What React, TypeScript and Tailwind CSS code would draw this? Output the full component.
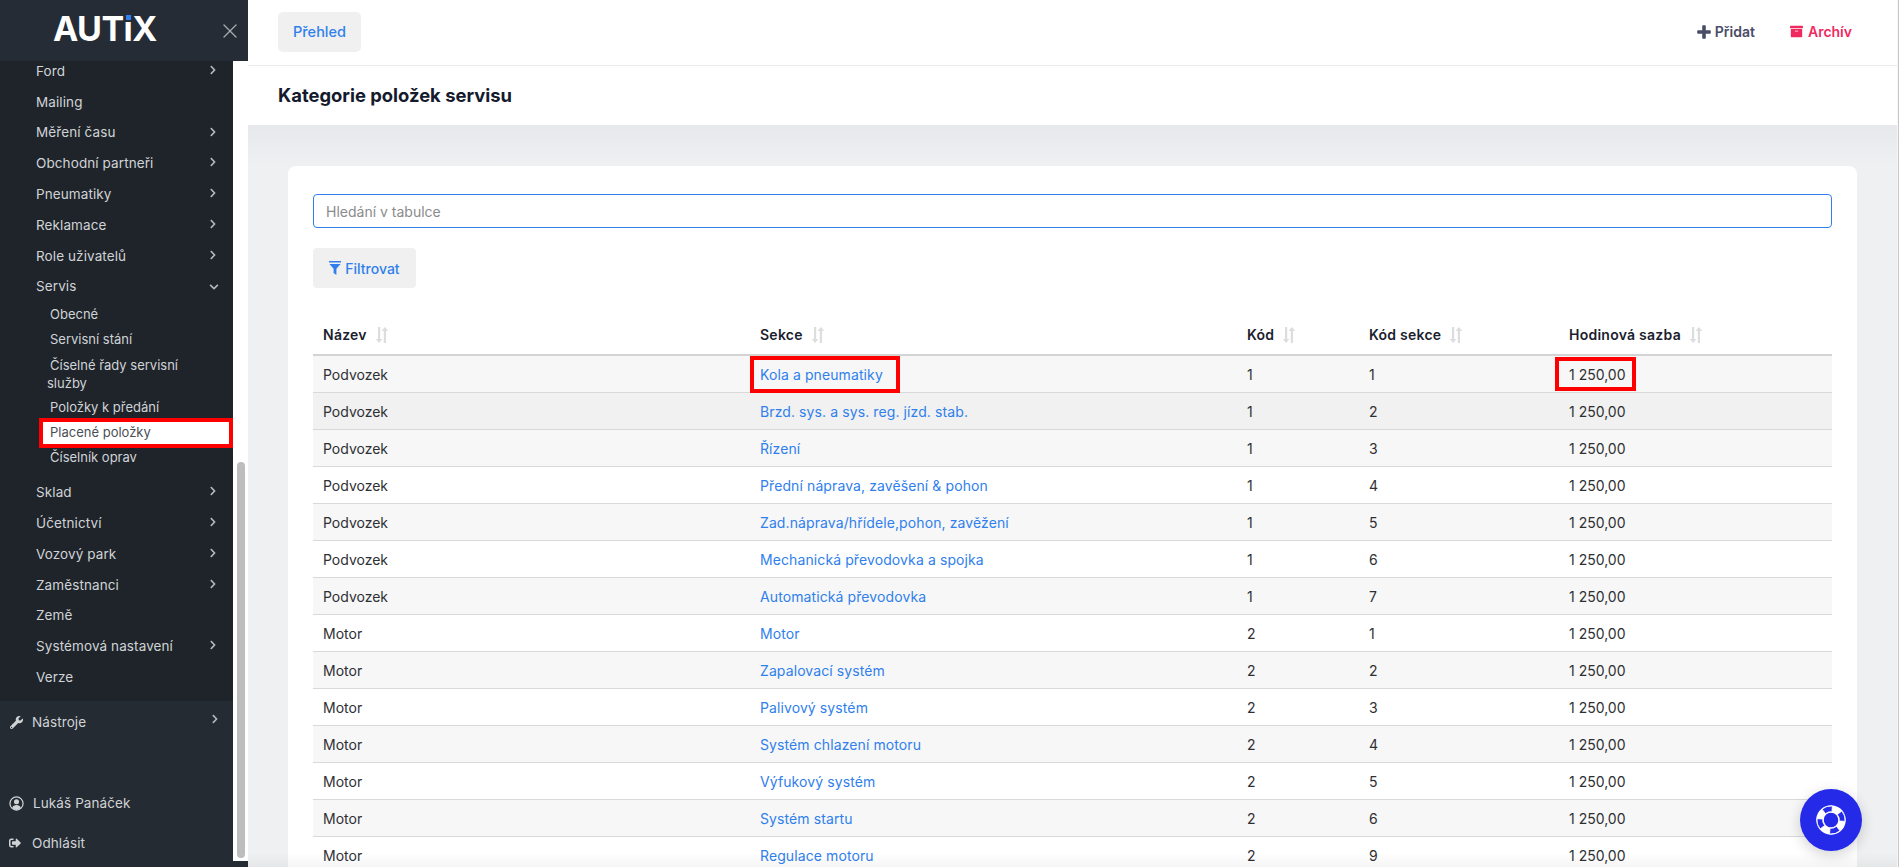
import { FaArchive, FaChevronDown, FaChevronRight, FaSignOutAlt, FaWrench } from "react-icons/fa";
import { X } from "lucide-react";

const font = { fontFamily: "Inter, 'Noto Sans', sans-serif" };

const topMenu: [string, boolean][] = [
  ["Ford", true],
  ["Mailing", false],
  ["Měření času", true],
  ["Obchodní partneři", true],
  ["Pneumatiky", true],
  ["Reklamace", true],
  ["Role uživatelů", true],
];

const bottomMenu: [string, boolean][] = [
  ["Sklad", true],
  ["Účetnictví", true],
  ["Vozový park", true],
  ["Zaměstnanci", true],
  ["Země", false],
  ["Systémová nastavení", true],
  ["Verze", false],
];

const rows: [string, string, number, number][] = [
  ["Podvozek", "Kola a pneumatiky", 1, 1],
  ["Podvozek", "Brzd. sys. a sys. reg. jízd. stab.", 1, 2],
  ["Podvozek", "Řízení", 1, 3],
  ["Podvozek", "Přední náprava, zavěšení & pohon", 1, 4],
  ["Podvozek", "Zad.náprava/hřídele,pohon, zavěžení", 1, 5],
  ["Podvozek", "Mechanická převodovka a spojka", 1, 6],
  ["Podvozek", "Automatická převodovka", 1, 7],
  ["Motor", "Motor", 2, 1],
  ["Motor", "Zapalovací systém", 2, 2],
  ["Motor", "Palivový systém", 2, 3],
  ["Motor", "Systém chlazení motoru", 2, 4],
  ["Motor", "Výfukový systém", 2, 5],
  ["Motor", "Systém startu", 2, 6],
  ["Motor", "Regulace motoru", 2, 9],
];

const MenuRow = ({ label, arrow }: { label: string; arrow: boolean }) => (
  <li className="flex h-[30.8px] items-center justify-between pl-[36px] pr-[15px] text-[13.5px] tracking-[0.1px] text-[#d0d3d6]">
    <span>{label}</span>
    {arrow && <FaChevronRight className="mb-[2px] h-[10px] w-[10px] text-[#b5b8bc]" />}
  </li>
);

const SortIcon = () => (
  <svg viewBox="0 0 14 18" className="ml-[8px] h-[18px] w-[14px] text-[#dcdddf]" fill="currentColor">
    <path d="M3 1h2.2v12h2.2L4.1 17 .8 13H3z" />
    <path d="M8.8 17H11V5h2.2L9.9 1 6.6 5h2.2z" />
  </svg>
);

const FilterIcon = () => (
  <svg viewBox="0 0 12 14" className="h-[14px] w-[12px]" fill="currentColor">
    <rect x="0" y="0" width="12" height="1.5" />
    <path d="M.4 3h11.2L7.4 7.8V14L4.6 12V7.8z" />
  </svg>
);

const PlusIcon = () => (
  <svg viewBox="0 0 14 14" className="h-[14px] w-[14px]" fill="currentColor">
    <path d="M5.2 1a.8.8 0 0 1 .8-.8h2a.8.8 0 0 1 .8.8v4.2H13a.8.8 0 0 1 .8.8v2a.8.8 0 0 1-.8.8H8.800v4.200a.8.8 0 0 1-.8.8H6a.8.8 0 0 1-.8-.8V8.800H1a.8.8 0 0 1-.8-.8V6a.8.8 0 0 1 .8-.8h4.200z" />
  </svg>
);

const UserIcon = () => (
  <svg viewBox="0 0 16 16" className="h-[15px] w-[15px]" fill="none">
    <circle cx="8" cy="8" r="7" stroke="currentColor" strokeWidth="1.3" />
    <circle cx="8" cy="6.2" r="2.7" fill="currentColor" />
    <path d="M3.4 12.6c.7-2 2.4-3 4.6-3s3.9 1 4.6 3A7 7 0 0 1 8 15a7 7 0 0 1-4.6-2.4z" fill="currentColor" />
  </svg>
);

const LifebuoyIcon = () => (
  <svg viewBox="0 0 32 32" className="h-[32px] w-[32px]">
    <g transform="rotate(-17 16 16)">
      <circle cx="16" cy="16" r="11" fill="none" stroke="#fff" strokeWidth="7.5" />
      <path
        d="M10.6 3a14 14 0 0 1 10.8 0l-2 5.400a8 8 0 0 0-6.800 0zM29 10.600a14 14 0 0 1 0 10.800l-5.400-2a8 8 0 0 0 0-6.800zM21.400 29a14 14 0 0 1-10.800 0l2-5.400a8 8 0 0 0 6.800 0zM3 21.400a14 14 0 0 1 0-10.800l5.400 2a8 8 0 0 0 0 6.800z"
        fill="#2529e8"
        stroke="#fff"
        strokeWidth="0.8"
      />
    </g>
  </svg>
);

const Sidebar = () => (
  <aside className="flex h-full w-[248px] shrink-0 flex-col bg-[#252b33]">
    {/* logo */}
    <div className="flex h-[61px] shrink-0 items-center justify-between bg-[#262c35] pl-[53px] pr-[6px]">
      <div className="-mt-[3px] flex text-[34px] font-bold leading-none tracking-[-0.6px] text-white">
        AUT
        <span className="relative">
          ı
          <span className="absolute left-[2px] top-[3px] h-[5px] w-[5px] bg-[#2f80ed]" />
        </span>
        X
      </div>
      <X className="h-[24px] w-[24px] text-[#a8acb1]" strokeWidth={1.3} />
    </div>

    <div className="flex h-[800px] shrink-0">
      <div className="flex h-full w-[233px] flex-col">
        {/* menu */}
        <div className="h-[640px] shrink-0 overflow-hidden bg-[#1f242b]">
          <ul className="-mt-[5.4px]">
            {topMenu.map(([label, arrow]) => (
              <MenuRow key={label} label={label} arrow={arrow} />
            ))}
            <li className="flex h-[30.8px] items-center justify-between pl-[36px] pr-[14px] text-[13.5px] tracking-[0.1px] text-[#d0d3d6]">
              <span>Servis</span>
              <FaChevronDown className="h-[10px] w-[10px] text-[#b5b8bc]" />
            </li>
            {/* sub menu */}
            <li className="pb-[7px] text-[13px] text-[#d0d3d6]">
              <div className="flex h-[25px] items-center pl-[50px]">Obecné</div>
              <div className="flex h-[25px] items-center pl-[50px]">Servisní stání</div>
              <div className="pb-[3px] pl-[47px] pt-[4px] leading-[18px]">
                <span className="pl-[3px]">Číselné řady servisní</span>
                <br />
                služby
              </div>
              <div className="flex h-[25px] items-center pl-[50px]">Položky k předání</div>
              <div className="relative flex h-[25px] items-center pl-[50px] text-[#4a4f55]">
                <span className="absolute -top-[2px] bottom-[-3px] left-[39px] right-0 border-[4px] border-[#ff0000] bg-white" />
                <span className="relative">Placené položky</span>
              </div>
              <div className="flex h-[25px] items-center pl-[50px]">Číselník oprav</div>
            </li>
            {bottomMenu.map(([label, arrow]) => (
              <MenuRow key={label} label={label} arrow={arrow} />
            ))}
          </ul>
        </div>

        {/* tools and user */}
        <div className="flex-1 text-[13.5px] tracking-[0.1px] text-[#d0d3d6]">
          <div className="flex h-[42px] items-center justify-between pl-[10px] pr-[13px]">
            <span className="flex items-center gap-[9px]">
              <FaWrench className="h-[13px] w-[13px]" />
              Nástroje
            </span>
            <FaChevronRight className="mb-[6px] h-[10px] w-[10px] text-[#b5b8bc]" />
          </div>
          <div className="mt-[40px] flex h-[40px] items-center gap-[9px] pl-[9px]">
            <UserIcon />
            Lukáš Panáček
          </div>
          <div className="flex h-[40px] items-center gap-[11px] pl-[9px]">
            <FaSignOutAlt className="h-[12px] w-[12px]" />
            Odhlásit
          </div>
        </div>
      </div>

      {/* scrollbar */}
      <div className="h-full w-[15px] bg-white pl-[4px] pt-[401px]">
        <div className="h-[396px] w-[8px] rounded-full bg-[#bdbdbd]" />
      </div>
    </div>
  </aside>
);

const Header = () => (
  <>
    <div className="flex h-[66px] shrink-0 items-center justify-between border-b border-[#ebebeb] bg-white pb-[2px] pl-[30px] pr-[45px]">
      <button className="h-[40px] w-[83px] rounded-[5px] bg-[#f0f0f0] text-[14.5px] font-medium text-[#2f80ed]">Přehled</button>
      <div className="flex items-center text-[14px] font-semibold">
        <span className="flex items-center gap-[4px] text-[#494d66]">
          <PlusIcon />
          Přidat
        </span>
        <span className="ml-[35px] flex items-center gap-[5px] text-[#ef2a5f]">
          <FaArchive className="h-[13px] w-[13px]" />
          Archív
        </span>
      </div>
    </div>
    <div className="flex h-[59px] shrink-0 items-center bg-white pl-[30px] pt-[1px] text-[18.4px] font-bold text-[#151a2d]">
      Kategorie položek servisu
    </div>
  </>
);

const DataTable = () => (
  <table className="w-[1519px] table-fixed border-collapse text-[14px] text-[#2e2f33]">
    <colgroup>
      <col className="w-[437px]" />
      <col className="w-[487px]" />
      <col className="w-[122px]" />
      <col className="w-[200px]" />
      <col className="w-[273px]" />
    </colgroup>
    <thead>
      <tr className="h-[67px] border-b-[2px] border-[#d3d3d3] text-left">
        {["Název", "Sekce", "Kód", "Kód sekce", "Hodinová sazba"].map((h) => (
          <th key={h} className="px-[10px] pb-[9px] align-bottom text-[14px] font-semibold tracking-[0.25px] text-[#1b1e2e]">
            <span className="flex items-center">
              {h}
              <SortIcon />
            </span>
          </th>
        ))}
      </tr>
    </thead>
    <tbody>
      {rows.map(([name, section, code, sectionCode], i) => (
        <tr
          key={section}
          className={`h-[37px] border-b border-[#d9d9d9] ${i === 1 ? "bg-[#f1f1f1]" : i % 2 === 0 ? "bg-[#f7f7f7]" : "bg-white"}`}
        >
          <td className="px-[10px] pt-[1px]">{name}</td>
          <td className="relative px-[10px] pt-[1px] tracking-[0.1px] text-[#2f80ed]">
            {i === 0 && <span className="absolute left-0 top-0 h-[37px] w-[150px] border-[4px] border-[#ff0000]" />}
            {section}
          </td>
          <td className="px-[10px] pt-[1px]">{code}</td>
          <td className="px-[10px] pt-[1px]">{sectionCode}</td>
          <td className="relative px-[10px] pt-[1px]">
            {i === 0 && <span className="absolute -left-[4px] top-[1px] h-[34px] w-[81px] border-[4px] border-[#ff0000]" />}1 250,00
          </td>
        </tr>
      ))}
    </tbody>
  </table>
);

export default function App() {
  return (
    <div className="relative flex h-[867px] w-[1902px] overflow-hidden bg-white" style={font}>
      <Sidebar />
      <main className="flex h-full w-[1649px] flex-col">
        <Header />
        <div className="flex-1 overflow-hidden bg-[linear-gradient(#e6e8eb,#eef0f2_40px)] px-[40px] pt-[41px]">
          <div className="h-[720px] rounded-t-[8px] bg-white px-[25px] pt-[28px]">
            <div className="flex h-[34px] items-center rounded-[4px] border border-[#2f80ed] px-[12px] text-[14px] text-[#8b8b8b]">
              Hledání v tabulce
            </div>
            <button className="mt-[20px] flex h-[40px] w-[103px] items-center justify-center gap-[4px] rounded-[4px] bg-[#f0f0f0] text-[14px] font-medium text-[#2f80ed]">
              <FilterIcon />
              Filtrovat
            </button>
            <DataTable />
          </div>
        </div>
      </main>
      {/* page scrollbar edge */}
      <div className="h-full w-[5px] border-l border-[#f6f6f6] bg-white">
        <div className="h-full w-px bg-[#c8c8c8]" />
      </div>
      {/* fade at the bottom of the page */}
      <div className="pointer-events-none absolute bottom-0 left-[248px] h-[14px] w-[1649px] bg-gradient-to-b from-transparent to-black/[0.04]" />
      {/* help button */}
      <button className="absolute left-[1800px] top-[789px] flex h-[62px] w-[62px] items-center justify-center rounded-full bg-[#2529e8] shadow-[0_4px_14px_rgba(0,0,0,0.18)]">
        <LifebuoyIcon />
      </button>
    </div>
  );
}
